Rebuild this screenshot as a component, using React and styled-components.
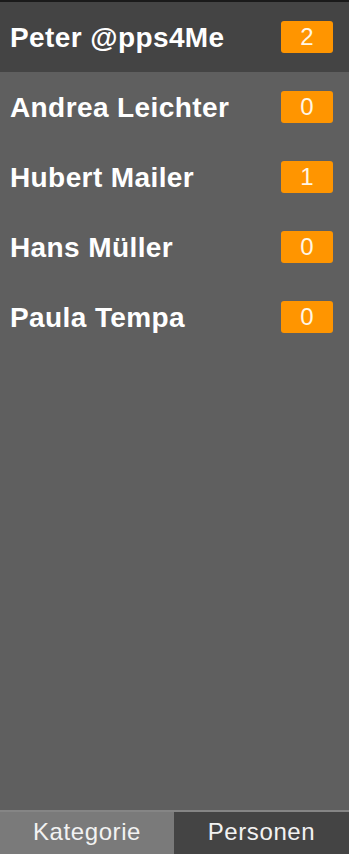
import React, { useState } from 'react'
import styled, { createGlobalStyle } from 'styled-components'

const GlobalStyle = createGlobalStyle`
  html, body, #root {
    margin: 0;
    padding: 0;
    height: 100%;
  }
  body {
    background: #5f5f5f;
    font-family: "Liberation Sans", Arial, sans-serif;
  }
`

const people = [
  { name: 'Peter @pps4Me', count: 2 },
  { name: 'Andrea Leichter', count: 0 },
  { name: 'Hubert Mailer', count: 1 },
  { name: 'Hans Müller', count: 0 },
  { name: 'Paula Tempa', count: 0 },
]

const Sidebar = styled.div`
  display: flex;
  flex-direction: column;
  height: 854px;
  width: 349px;
  background: #5f5f5f;
  border-top: 2px solid #1a1a1a;
  box-sizing: border-box;
`

const List = styled.ul`
  list-style: none;
  margin: 0;
  padding: 0;
  flex: 1;
`

const Row = styled.li`
  display: flex;
  align-items: center;
  justify-content: space-between;
  height: 70px;
  padding: 0 16px 0 10px;
  background: ${p => (p.$active ? '#444444' : 'transparent')};
`

const Name = styled.span`
  color: #ffffff;
  font-size: 28px;
  font-weight: 700;
  letter-spacing: 0.4px;
  padding-top: 1px;
`

const Badge = styled.span`
  display: flex;
  align-items: center;
  justify-content: center;
  width: 52px;
  height: 32px;
  border-radius: 3px;
  background: #ff9500;
  color: #fff6e6;
  font-size: 24px;
`

const Tabs = styled.div`
  display: flex;
  height: 42px;
  border-top: 2px solid #858585;
`

const Tab = styled.button`
  flex: ${p => (p.$wide ? '0 0 174px' : '1')};
  border: none;
  margin: 0;
  padding: 0 0 2px;
  background: ${p => (p.$active ? '#444444' : '#7a7a7a')};
  color: #f2f2f2;
  font-family: "Liberation Sans", Arial, sans-serif;
  font-size: 24px;
  letter-spacing: 0.6px;
  cursor: pointer;
`

export default function App() {
  const [tab, setTab] = useState('personen')
  return (
    <>
      <GlobalStyle />
      <Sidebar>
        <List>
          {people.map((p, i) => (
            <Row key={p.name} $active={i === 0}>
              <Name>{p.name}</Name>
              <Badge>{p.count}</Badge>
            </Row>
          ))}
        </List>
        <Tabs>
          <Tab $wide $active={tab === 'kategorie'} onClick={() => setTab('kategorie')}>
            Kategorie
          </Tab>
          <Tab $active={tab === 'personen'} onClick={() => setTab('personen')}>
            Personen
          </Tab>
        </Tabs>
      </Sidebar>
    </>
  )
}
